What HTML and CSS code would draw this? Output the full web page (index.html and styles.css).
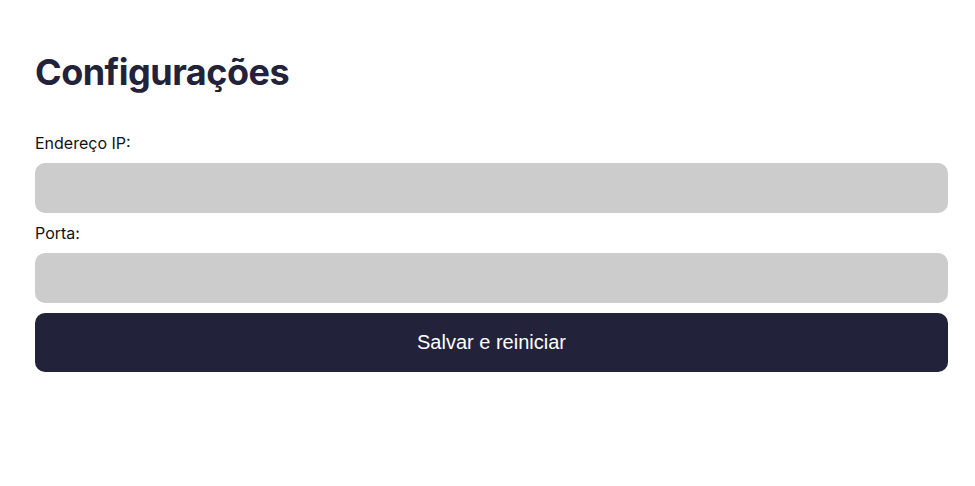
FILE: index.html
```html
<!DOCTYPE html>
<html lang="pt">
<head>
<meta charset="utf-8">
<title>Configurações</title>
<link rel="stylesheet" href="styles.css">
</head>
<body>
<main class="page">
  <h1 class="title">Configurações</h1>
  <form class="form">
    <label class="label" for="ip">Endereço IP:</label>
    <input class="field" id="ip" type="text">
    <label class="label" for="porta">Porta:</label>
    <input class="field" id="porta" type="text">
    <button class="btn" type="button">Salvar e reiniciar</button>
  </form>
</main>
</body>
</html>
```
FILE: styles.css
```css
html, body {
  margin: 0;
  padding: 0;
  background: #ffffff;
}
.page {
  width: 913px;
  padding: 50px 0 0 35px;
  font-family: Inter, "Noto Sans", sans-serif;
  color: #222239;
}
.title {
  margin: 0 0 39px 0;
  font-size: 36px;
  font-weight: 700;
  line-height: 44px;
  letter-spacing: -0.5px;
  color: #22223a;
}
.form {
  display: flex;
  flex-direction: column;
}
.label {
  font-size: 16px;
  line-height: 20px;
  color: #111111;
  margin-bottom: 10px;
}
.field {
  box-sizing: border-box;
  height: 50px;
  border: none;
  border-radius: 10px;
  background: #cccccc;
  margin: 0 0 10px 0;
  padding: 0 12px;
  font-size: 16px;
}
.btn {
  height: 59px;
  border: none;
  border-radius: 10px;
  background: #22223a;
  color: #ffffff;
  font-family: "Liberation Sans", Arial, sans-serif;
  font-size: 20px;
  cursor: pointer;
}
```
